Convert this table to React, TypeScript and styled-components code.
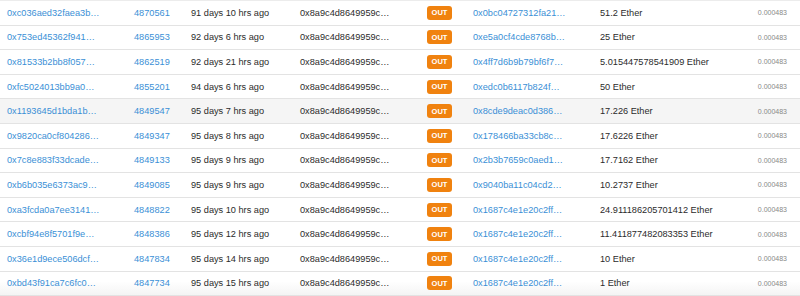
import React from "react";
import styled, { createGlobalStyle } from "styled-components";

const Global = createGlobalStyle`
  body {
    margin: 0;
    background: #fff;
    font-family: "Liberation Sans", Arial, sans-serif;
  }
`;

type Tx = {
  hash: string;
  block: string;
  age: string;
  to: string;
  value: string;
};

const FROM = "0x8a9c4d8649959c…";

const txs: Tx[] = [
  { hash: "0xc036aed32faea3b…", block: "4870561", age: "91 days 10 hrs ago", to: "0x0bc04727312fa21…", value: "51.2 Ether" },
  { hash: "0x753ed45362f941…", block: "4865953", age: "92 days 6 hrs ago", to: "0xe5a0cf4cde8768b…", value: "25 Ether" },
  { hash: "0x81533b2bb8f057…", block: "4862519", age: "92 days 21 hrs ago", to: "0x4ff7d6b9b79bf6f7…", value: "5.015447578541909 Ether" },
  { hash: "0xfc5024013bb9a0…", block: "4855201", age: "94 days 6 hrs ago", to: "0xedc0b6117b824f…", value: "50 Ether" },
  { hash: "0x1193645d1bda1b…", block: "4849547", age: "95 days 7 hrs ago", to: "0x8cde9deac0d386…", value: "17.226 Ether" },
  { hash: "0x9820ca0cf804286…", block: "4849347", age: "95 days 8 hrs ago", to: "0x178466ba33cb8c…", value: "17.6226 Ether" },
  { hash: "0x7c8e883f33dcade…", block: "4849133", age: "95 days 9 hrs ago", to: "0x2b3b7659c0aed1…", value: "17.7162 Ether" },
  { hash: "0xb6b035e6373ac9…", block: "4849085", age: "95 days 9 hrs ago", to: "0x9040ba11c04cd2…", value: "10.2737 Ether" },
  { hash: "0xa3fcda0a7ee3141…", block: "4848822", age: "95 days 10 hrs ago", to: "0x1687c4e1e20c2ff…", value: "24.911186205701412 Ether" },
  { hash: "0xcbf94e8f5701f9e…", block: "4848386", age: "95 days 12 hrs ago", to: "0x1687c4e1e20c2ff…", value: "11.411877482083353 Ether" },
  { hash: "0x36e1d9ece506dcf…", block: "4847834", age: "95 days 14 hrs ago", to: "0x1687c4e1e20c2ff…", value: "10 Ether" },
  { hash: "0xbd43f91ca7c6fc0…", block: "4847734", age: "95 days 15 hrs ago", to: "0x1687c4e1e20c2ff…", value: "1 Ether" },
];

const App = () => {
  return (
    <>
      <Global />
      <Table>
        {txs.map((tx, i) => (
          <Row key={tx.hash} $hover={i === 4} $last={i === txs.length - 1}>
            <Link>{tx.hash}</Link>
            <Link>{tx.block}</Link>
            <Cell>{tx.age}</Cell>
            <Cell>{FROM}</Cell>
            <Cell>
              <Badge>OUT</Badge>
            </Cell>
            <Link>{tx.to}</Link>
            <Cell>{tx.value}</Cell>
            <Fee>0.000483</Fee>
          </Row>
        ))}
      </Table>
    </>
  );
};
export default App;

const Table = styled.div`
  width: 800px;
  border-top: 1px solid #ececec;
`;

const Row = styled.div<{ $hover?: boolean; $last?: boolean }>`
  display: grid;
  grid-template-columns: 127px 57px 109px 127px 46px 127px 1fr auto;
  align-items: center;
  height: 23.6px;
  padding: 0 13px 0 7px;
  border-bottom: 1px solid #e3e3e3;
  background: ${(p) =>
    p.$hover
      ? "#f5f5f5"
      : p.$last
      ? "linear-gradient(#fff 40%, #f4f4f4)"
      : "#fff"};
  font-size: 9.2px;
`;

const Cell = styled.div`
  color: #2b2b2b;
  white-space: nowrap;
  display: flex;
  align-items: center;
`;

const Link = styled(Cell)`
  color: #3a8fd6;
`;

const Badge = styled.span`
  display: inline-flex;
  align-items: center;
  justify-content: center;
  width: 25px;
  height: 14px;
  border-radius: 3px;
  background: #f0820f;
  color: #fff;
  font-size: 7.5px;
  font-weight: 600;
`;

const Fee = styled.div`
  color: #888;
  font-size: 7px;
  text-align: right;
`;
